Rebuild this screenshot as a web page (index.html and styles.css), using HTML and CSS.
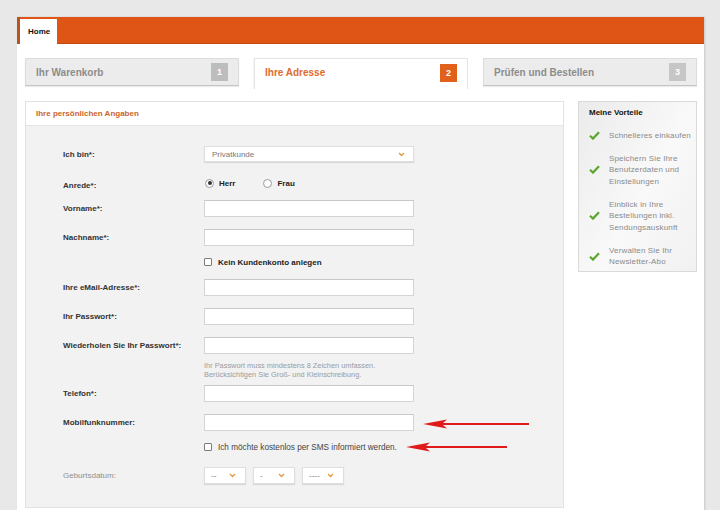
FILE: index.html
```html
<!DOCTYPE html>
<html lang="de">
<head>
<meta charset="utf-8">
<title>Ihre Adresse</title>
<link rel="stylesheet" href="styles.css">
</head>
<body>
<div class="page">
  <div class="shell">
    <div class="topbar"><div class="home-tab">Home</div></div>
    <div class="content">
      <div class="steps">
        <div class="step"><span>Ihr Warenkorb</span><span class="badge">1</span></div>
        <div class="step active"><span>Ihre Adresse</span><span class="badge">2</span></div>
        <div class="step"><span>Prüfen und Bestellen</span><span class="badge light">3</span></div>
      </div>
      <div class="main">
        <section class="panel">
          <div class="panel-head">Ihre persönlichen Angaben</div>
          <div class="panel-body">
            <div class="row r-select">
              <label class="lbl">Ich bin*:</label>
              <div class="select wide"><span>Privatkunde</span><svg class="chev" width="7" height="5" viewBox="0 0 7 5"><path d="M1 1 L3.5 3.5 L6 1" fill="none" stroke="#e0993f" stroke-width="1.3"/></svg></div>
            </div>
            <div class="row r-radio">
              <label class="lbl">Anrede*:</label>
              <div class="radios">
                <span class="opt"><span class="radio on"></span>Herr</span>
                <span class="opt"><span class="radio"></span>Frau</span>
              </div>
            </div>
            <div class="row r-first">
              <label class="lbl">Vorname*:</label>
              <div class="input"></div>
            </div>
            <div class="row r-std">
              <label class="lbl">Nachname*:</label>
              <div class="input"></div>
            </div>
            <div class="row r-check">
              <span></span>
              <span class="check-opt bold"><span class="box"></span>Kein Kundenkonto anlegen</span>
            </div>
            <div class="row r-after-check">
              <label class="lbl">Ihre eMail-Adresse*:</label>
              <div class="input"></div>
            </div>
            <div class="row r-std">
              <label class="lbl">Ihr Passwort*:</label>
              <div class="input"></div>
            </div>
            <div class="row r-std">
              <label class="lbl">Wiederholen Sie Ihr Passwort*:</label>
              <div class="input"></div>
            </div>
            <div class="row r-hint">
              <span></span>
              <p class="hint">Ihr Passwort muss mindestens 8 Zeichen umfassen.<br>Berücksichtigen Sie Groß- und Kleinschreibung.</p>
            </div>
            <div class="row r-after-hint">
              <label class="lbl">Telefon*:</label>
              <div class="input"></div>
            </div>
            <div class="row r-std">
              <label class="lbl">Mobilfunknummer:</label>
              <div class="input"></div>
            </div>
            <div class="row r-check2">
              <span></span>
              <span class="check-opt"><span class="box"></span>Ich möchte kostenlos per SMS informiert werden.</span>
            </div>
            <div class="row r-date">
              <label class="lbl muted">Geburtsdatum:</label>
              <div class="dates">
                <div class="select small"><span>--</span><svg class="chev" width="7" height="5" viewBox="0 0 7 5"><path d="M1 1 L3.5 3.5 L6 1" fill="none" stroke="#e0993f" stroke-width="1.3"/></svg></div>
                <div class="select small"><span>-</span><svg class="chev" width="7" height="5" viewBox="0 0 7 5"><path d="M1 1 L3.5 3.5 L6 1" fill="none" stroke="#e0993f" stroke-width="1.3"/></svg></div>
                <div class="select small"><span>----</span><svg class="chev" width="7" height="5" viewBox="0 0 7 5"><path d="M1 1 L3.5 3.5 L6 1" fill="none" stroke="#e0993f" stroke-width="1.3"/></svg></div>
              </div>
            </div>
            <svg class="arrow arrow-1" width="106" height="10" viewBox="0 0 106 10"><path d="M0 5 L24 0.5 L20 4 H106 V6 H20 L24 9.5 Z" fill="#e01a1a"/></svg>
            <svg class="arrow arrow-2" width="101" height="10" viewBox="0 0 101 10"><path d="M0 5 L24 0.5 L20 4 H101 V6 H20 L24 9.5 Z" fill="#e01a1a"/></svg>
          </div>
        </section>
        <aside class="benefits">
          <h3 class="benefits-title">Meine Vorteile</h3>
          <ul class="benefit-list">
            <li><svg class="tick" width="11" height="9" viewBox="0 0 11 9"><path d="M1 4.8 L4 7.6 L10 1.2" fill="none" stroke="#5aa62e" stroke-width="2.2"/></svg><span>Schnelleres einkaufen</span></li>
            <li><svg class="tick" width="11" height="9" viewBox="0 0 11 9"><path d="M1 4.8 L4 7.6 L10 1.2" fill="none" stroke="#5aa62e" stroke-width="2.2"/></svg><span>Speichern Sie Ihre Benutzerdaten und Einstellungen</span></li>
            <li><svg class="tick" width="11" height="9" viewBox="0 0 11 9"><path d="M1 4.8 L4 7.6 L10 1.2" fill="none" stroke="#5aa62e" stroke-width="2.2"/></svg><span>Einblick in Ihre Bestellungen inkl. Sendungsauskunft</span></li>
            <li><svg class="tick" width="11" height="9" viewBox="0 0 11 9"><path d="M1 4.8 L4 7.6 L10 1.2" fill="none" stroke="#5aa62e" stroke-width="2.2"/></svg><span>Verwalten Sie Ihr Newsletter-Abo</span></li>
          </ul>
        </aside>
      </div>
    </div>
  </div>
</div>
</body>
</html>
```

FILE: styles.css
```css
* { box-sizing: border-box; }
html, body { margin: 0; padding: 0; }
body {
  background: #e8e8e9;
  font-family: "Liberation Sans", Arial, sans-serif;
  color: #333;
}
.page { padding: 17px 16px 0 17px; }
.shell {
  background: #fff;
  box-shadow: 1px 0 2px rgba(0,0,0,0.14);
  padding-bottom: 30px;
}
.topbar {
  height: 27px;
  background: #df5515;
  border-left: 3px solid #b9541f;
  box-shadow: inset 0 -1px 0 #c5480f;
  display: flex;
  align-items: flex-end;
}
.home-tab {
  width: 37px;
  height: 25px;
  background: #fff;
  font-size: 8px;
  font-weight: bold;
  color: #111;
  padding-left: 8px;
  display: flex;
  align-items: center;
}
.content { padding: 14px 7px 0 8px; }
.steps {
  display: grid;
  grid-template-columns: repeat(3, 1fr);
  grid-template-rows: 28px;
  column-gap: 15px;
  align-items: start;
}
.step {
  height: 28px;
  background: #ececec;
  border: 1px solid #dcdcdc;
  border-bottom-color: #c4c4c4;
  box-shadow: 0 1px 1px rgba(0,0,0,0.08);
  display: flex;
  align-items: center;
  justify-content: space-between;
  padding: 0 10px;
  font-size: 10px;
  font-weight: bold;
  color: #8c8c8c;
}
.step.active {
  height: 31px;
  background: #fff;
  border-color: #e4e4e4;
  border-bottom: none;
  box-shadow: -1px 0 1px rgba(0,0,0,0.04);
  color: #e06a2c;
  padding-bottom: 3px;
}
.badge {
  width: 17px;
  height: 18px;
  background: #bdbdbd;
  color: #fff;
  font-size: 9px;
  font-weight: bold;
  display: flex;
  align-items: center;
  justify-content: center;
}
.badge.light { background: #c6c6c6; }
.step.active .badge { background: #e0601c; }

.main {
  display: flex;
  gap: 14px;
  margin-top: 15px;
  align-items: flex-start;
}
.panel {
  width: 539px;
  border: 1px solid #e2e2e2;
}
.panel-head {
  height: 24px;
  background: #fff;
  border-bottom: 1px solid #e4e4e4;
  padding-left: 10px;
  display: flex;
  align-items: center;
  font-size: 8px;
  font-weight: bold;
  color: #c9642b;
}
.panel-body {
  position: relative;
  background: #f2f2f2;
  padding: 20px 0 23px 37px;
}
.row {
  display: grid;
  grid-template-columns: 141px 210px;
  align-items: center;
}
.lbl {
  font-size: 8px;
  font-weight: bold;
  color: #333;
}
.lbl.muted { font-weight: normal; color: #8f8f8f; }
.r-radio { margin-top: 14px; height: 14px; }
.r-radio .lbl { position: relative; top: 2px; }
.r-first { margin-top: 10px; }
.r-std { margin-top: 12px; }
.r-check { margin-top: 10px; height: 12px; }
.r-after-check { margin-top: 11px; }
.r-hint { margin-top: 8px; }
.r-after-hint { margin-top: 6px; }
.r-check2 { margin-top: 10px; height: 12px; }
.r-date { margin-top: 14px; }

.input {
  height: 17px;
  background: #fff;
  border: 1px solid #d4d4d4;
  border-top-color: #c8c8c8;
}
.select {
  background: #fff;
  border: 1px solid #dedede;
  box-shadow: 0 1px 1px rgba(0,0,0,0.1);
  display: flex;
  align-items: center;
  justify-content: space-between;
  font-size: 8px;
  color: #777;
}
.select.wide { height: 16px; padding: 0 8px 0 7px; }
.select.small { width: 42px; height: 17px; padding: 0 9px 0 6px; }
.dates { display: flex; gap: 7px; }
.chev { display: block; }

.radios { display: flex; align-items: center; font-size: 8px; font-weight: bold; color: #222; }
.opt { display: flex; align-items: center; margin-right: 27px; }
.radio {
  width: 9px;
  height: 9px;
  border: 1px solid #9a9a9a;
  border-radius: 50%;
  background: #fff;
  margin: 0 5px 0 1px;
  display: flex;
  align-items: center;
  justify-content: center;
}
.radio.on::after {
  content: "";
  width: 4px;
  height: 4px;
  border-radius: 50%;
  background: #333;
}
.check-opt {
  display: flex;
  align-items: center;
  font-size: 8.2px;
  color: #444;
}
.check-opt.bold { font-weight: bold; font-size: 8px; color: #222; }
.box {
  width: 8px;
  height: 8px;
  border: 1px solid #7a7a7a;
  border-radius: 1px;
  background: #fff;
  margin-right: 6px;
}
.hint {
  margin: 0;
  font-size: 7.4px;
  line-height: 8.5px;
  color: #9b9b9b;
}

.arrow { position: absolute; display: block; }
.arrow-1 { left: 397px; top: 293px; }
.arrow-2 { left: 380px; top: 316px; }

.benefits {
  width: 119px;
  height: 171px;
  border: 1px solid #dadada;
  background: linear-gradient(120deg, #ebebeb 0%, #f9f9f9 55%, #f1f1f1 100%);
  padding: 5px 4px 0 10px;
}
.benefits-title {
  margin: 0;
  font-size: 8px;
  line-height: 11px;
  font-weight: bold;
  color: #111;
}
.benefit-list { list-style: none; margin: 0; padding: 0; }
.benefit-list li {
  display: flex;
  align-items: center;
  margin-top: 11.5px;
  font-size: 8px;
  line-height: 11.5px;
  letter-spacing: 0.15px;
  color: #8a8a8a;
}
.benefit-list li span { width: 87px; margin-left: 9px; }
.tick { flex: none; display: block; }
```
